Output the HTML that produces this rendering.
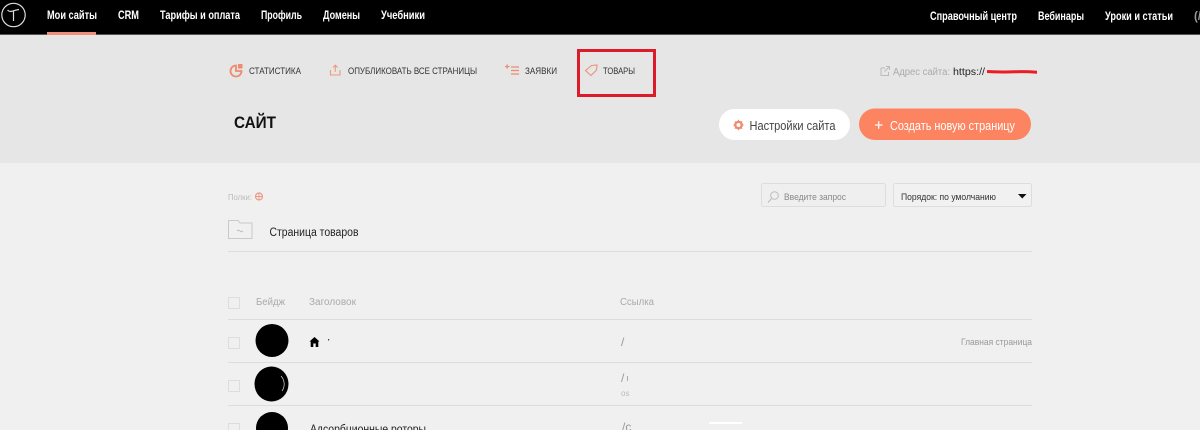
<!DOCTYPE html>
<html lang="ru"><head><meta charset="utf-8"><title>Мои сайты</title>
<style>
html,body{margin:0;padding:0;width:1200px;height:430px;overflow:hidden;background:#f0f0f0}
svg{display:block;filter:blur(.3px)}
text{font-family:"Liberation Sans","DejaVu Sans",sans-serif}
.nav{font-size:11.5px;font-weight:bold;fill:#fff}
.top{font-size:9px;fill:#333}
</style></head><body>
<svg width="1200" height="430" viewBox="0 0 1200 430" xmlns="http://www.w3.org/2000/svg">
<rect width="1200" height="430" fill="#f0f0f0"/>
<rect y="35" width="1200" height="128" fill="#e6e6e6"/>
<rect width="1200" height="34" fill="#000"/>
<rect y="34" width="1200" height="1" fill="#555"/>
<rect x="47" y="32" width="49" height="3" fill="#f0907a"/>

<circle cx="13.500" cy="15" r="11.700" fill="none" stroke="#ddd" stroke-width="1.200"/>
<path d="M7.500 10c2 2.200 4 1.500 6 .8s3.500-1 5.500-1.300M13.500 11v10" fill="none" stroke="#ddd" stroke-width="1.200"/>

<text class="nav" x="47" y="19" textLength="50" lengthAdjust="spacingAndGlyphs">Мои сайты</text>
<text class="nav" x="118" y="19" textLength="21" lengthAdjust="spacingAndGlyphs">CRM</text>
<text class="nav" x="160" y="19" textLength="80" lengthAdjust="spacingAndGlyphs">Тарифы и оплата</text>
<text class="nav" x="261" y="19" textLength="41" lengthAdjust="spacingAndGlyphs">Профиль</text>
<text class="nav" x="323" y="19" textLength="37" lengthAdjust="spacingAndGlyphs">Домены</text>
<text class="nav" x="381" y="19" textLength="44" lengthAdjust="spacingAndGlyphs">Учебники</text>
<text class="nav" x="930" y="20" textLength="87" lengthAdjust="spacingAndGlyphs">Справочный центр</text>
<text class="nav" x="1038" y="20" textLength="46" lengthAdjust="spacingAndGlyphs">Вебинары</text>
<text class="nav" x="1105" y="20" textLength="68" lengthAdjust="spacingAndGlyphs">Уроки и статьи</text>
<text class="nav" x="1194" y="20" style="fill:#999">(/</text>

<!-- toolbar icons -->
<path d="M236 65.500a5.500 5.500 0 1 0 5.500 5.500h-5.500z" fill="none" stroke="#ee8a6e" stroke-width="1.800"/>
<path d="M238 64h4.500v4.500H238z" fill="#ee8a6e"/>
<text class="top" x="249" y="74" textLength="52" lengthAdjust="spacingAndGlyphs">СТАТИСТИКА</text>

<path d="M330.500 70v5h9.500v-5M335.300 72v-6.500M333 67.500l2.300-2.300 2.300 2.300" fill="none" stroke="#ee9a80" stroke-width="1.100"/>
<text class="top" x="348" y="74" textLength="129" lengthAdjust="spacingAndGlyphs">ОПУБЛИКОВАТЬ ВСЕ СТРАНИЦЫ</text>

<path d="M505 66.500h4.500M507.200 64.500v4.200M511 67h8M511 70.500h8M511 74h8" fill="none" stroke="#ee8a6e" stroke-width="1.200"/>
<text class="top" x="525" y="74" textLength="32" lengthAdjust="spacingAndGlyphs">ЗАЯВКИ</text>

<path d="M585.500 70.500l6-5 5.500-.5-.5 5-5.500 5.500z" fill="none" stroke="#ee9078" stroke-width="1.100"/>
<text class="top" x="603" y="74" textLength="32" lengthAdjust="spacingAndGlyphs">ТОВАРЫ</text>

<rect x="578.500" y="50.500" width="76" height="45" fill="none" stroke="#dc1c2a" stroke-width="3"/>

<text x="234" y="128" font-size="17" font-weight="bold" fill="#111" textLength="42" lengthAdjust="spacingAndGlyphs">САЙТ</text>

<!-- site address -->
<path d="M881 68h4M881 68v7.500h7.500v-3.500M884.500 71.500l4.500-4.500M886 66.500h3.500v3.500" fill="none" stroke="#bbb" stroke-width="1"/>
<text x="893" y="75" font-size="10" fill="#aaa" textLength="57" lengthAdjust="spacingAndGlyphs">Адрес сайта:</text>
<text x="953" y="75" font-size="10" fill="#222" textLength="32" lengthAdjust="spacingAndGlyphs">https://</text>
<path d="M987 71.500c10 .5 20 .8 28 .3 8-.3 16 0 22 .5" fill="none" stroke="#ea1c24" stroke-width="3"/>

<!-- buttons -->
<rect x="719" y="109" width="131" height="31" rx="15.500" fill="#fff"/>
<circle cx="738.500" cy="125" r="3.200" fill="none" stroke="#ee8a6e" stroke-width="2.400"/>
<path d="M738.500 119.800v1.500M738.500 128.700v1.500M733.300 125h1.500M742.200 125h1.500M734.800 121.300l1 1M741.200 127.700l1 1M742.200 121.300l-1 1M735.800 127.700l-1 1" stroke="#ee8a6e" stroke-width="1"/>
<text x="749.500" y="130" font-size="12.500" fill="#444" textLength="86" lengthAdjust="spacingAndGlyphs">Настройки сайта</text>
<rect x="859" y="108.500" width="172" height="31.500" rx="15.700" fill="#fd8460"/>
<path d="M875 125h7.500M878.700 121.300v7.500" stroke="#fff" stroke-width="1.200"/>
<text x="890" y="130" font-size="12.500" fill="#fff" textLength="125" lengthAdjust="spacingAndGlyphs">Создать новую страницу</text>

<!-- folders -->
<text x="228" y="200" font-size="8.500" fill="#bbb" textLength="24" lengthAdjust="spacingAndGlyphs">Полки:</text>
<circle cx="259" cy="196.500" r="3.500" fill="none" stroke="#ee9a88" stroke-width="1.200"/>
<path d="M255.500 196.500h7M259 193v7" stroke="#ee9a88" stroke-width=".9"/>
<path d="M228.500 220.500h9.500l2 2.500h12v15.500h-23.500z" fill="none" stroke="#c9c9c9" stroke-width="1"/>
<path d="M237 231c1-1 2-1 3 0s2 1 3 0" fill="none" stroke="#bbb" stroke-width=".9"/>
<text x="269.500" y="236" font-size="11.500" fill="#222" textLength="89" lengthAdjust="spacingAndGlyphs">Страница товаров</text>
<rect x="228" y="251" width="804" height="1" fill="#ddd"/>

<!-- search and order -->
<rect x="761.500" y="183.500" width="124" height="23" rx="2" fill="#efefef" stroke="#ddd"/>
<circle cx="774.500" cy="195.500" r="3.800" fill="none" stroke="#bbb"/>
<path d="M771.500 198.500l-3.500 4" stroke="#bbb" fill="none"/>
<text x="784" y="200" font-size="9.500" fill="#888" textLength="62" lengthAdjust="spacingAndGlyphs">Введите запрос</text>
<rect x="893.500" y="183.500" width="138" height="23" rx="2" fill="#f1f1f1" stroke="#ddd"/>
<text x="901" y="200" font-size="9.500" fill="#333" textLength="95" lengthAdjust="spacingAndGlyphs">Порядок: по умолчанию</text>
<path d="M1018 194h8.500l-4.250 4.500z" fill="#111"/>

<!-- table -->
<rect x="228.500" y="297.500" width="11" height="11" fill="none" stroke="#ddd"/>
<text x="256" y="305" font-size="10" fill="#aaa" textLength="29" lengthAdjust="spacingAndGlyphs">Бейдж</text>
<text x="309" y="305" font-size="10" fill="#aaa" textLength="47" lengthAdjust="spacingAndGlyphs">Заголовок</text>
<text x="620" y="305" font-size="10" fill="#aaa" textLength="34" lengthAdjust="spacingAndGlyphs">Ссылка</text>
<rect x="228" y="319" width="804" height="1" fill="#ddd"/>
<rect x="228" y="362" width="804" height="1" fill="#ddd"/>
<rect x="228" y="405" width="804" height="1" fill="#ddd"/>

<rect x="228.500" y="337.500" width="11" height="11" fill="none" stroke="#ddd"/>
<rect x="228.500" y="380.500" width="11" height="11" fill="none" stroke="#ddd"/>
<rect x="228.500" y="423.500" width="11" height="11" fill="none" stroke="#ddd"/>

<circle cx="272" cy="340.500" r="16.500" fill="#000"/>
<ellipse cx="271.500" cy="384" rx="17" ry="17.500" fill="#000"/>
<path d="M281 376a12 12 0 0 1 1 15" fill="none" stroke="#ddd" stroke-width=".7"/>
<circle cx="272" cy="428" r="16" fill="#000"/>

<path d="M309.500 341.500l5-4.500 5 4.500h-1.200v5.500h-2.600v-3.500h-2.400v3.500h-2.600v-5.500z" fill="#000"/>
<rect x="328" y="339" width="1.200" height="1.500" fill="#444"/>
<text x="310" y="433" font-size="11.500" fill="#222" textLength="116" lengthAdjust="spacingAndGlyphs">Адсорбционные роторы</text>

<text x="621" y="346" font-size="12" fill="#999">/</text>
<text x="621" y="382" font-size="12" fill="#999">/</text>
<rect x="627" y="376" width="1" height="5" fill="#aaa"/>
<text x="621" y="396" font-size="8" fill="#bbb">os</text>
<text x="622" y="431" font-size="12" fill="#999">/c</text>
<rect x="709" y="422" width="33" height="2" fill="#fff"/>
<text x="961" y="345" font-size="9.500" fill="#999" textLength="71" lengthAdjust="spacingAndGlyphs">Главная страница</text>
</svg>
</body></html>
